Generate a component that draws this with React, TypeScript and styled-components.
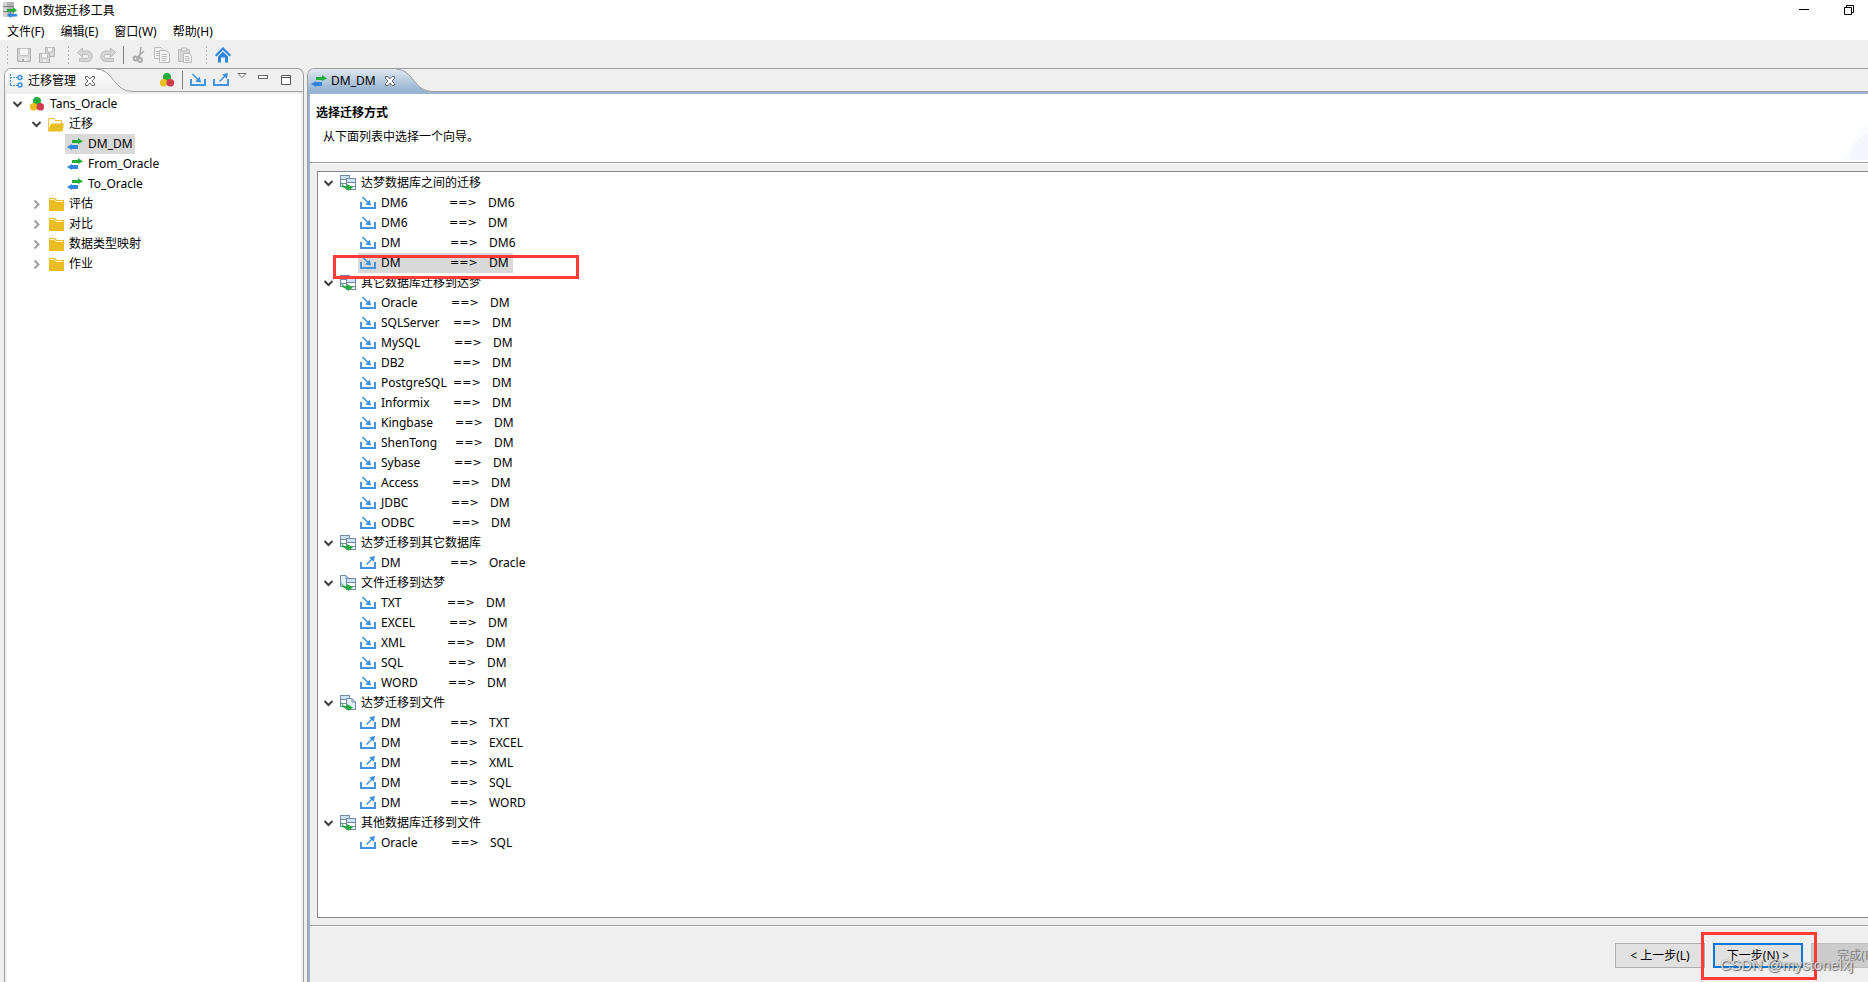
import React, { useState } from "react";
import styled, { createGlobalStyle, css } from "styled-components";

const GlobalStyle = createGlobalStyle`
  * { box-sizing: border-box; }
  html, body { margin: 0; padding: 0; }
  body {
    background: #efefef;
    color: #000;
    font-family: "Noto Sans", "Noto Sans CJK SC", sans-serif;
    font-size: 12px;
    line-height: 20px;
    overflow: hidden;
  }
  button { font: inherit; color: inherit; }
  ul { list-style: none; margin: 0; padding: 0; }
  svg { display: block; flex: none; }
`;

const line = "#a0a0a0";
const face = "#efefef";
const activeBlue = "#99b4d1";

/* ---------- frame ---------- */

const Window = styled.div`
  display: flex;
  flex-direction: column;
  height: 100vh;
  background: ${face};
`;

const TitleBar = styled.header`
  display: flex;
  align-items: center;
  height: 20px;
  padding: 0 14px 0 3px;
  background: #fff;
`;

const WindowTitle = styled.h1`
  flex: 1;
  margin: 0 0 0 5px;
  font-size: 12px;
  font-weight: 400;
  line-height: 20px;
  padding-top: 2px;
`;

const WindowButton = styled.button`
  display: flex;
  align-items: center;
  justify-content: center;
  width: 10px;
  height: 16px;
  margin-left: 35px;
  padding: 0;
  border: 0;
  background: none;
`;

const MenuBar = styled.nav`
  display: flex;
  gap: 16px;
  height: 20px;
  padding: 0 7px;
  background: #fff;
`;

const MenuButton = styled.button`
  height: 20px;
  padding: 2px 0 0;
  border: 0;
  background: none;
  line-height: 20px;
  white-space: nowrap;
`;

const ToolBar = styled.div`
  display: flex;
  align-items: center;
  height: 28px;
  padding: 2px 6px 0;
`;

const ToolGroup = styled.div`
  display: flex;
  align-items: center;
  gap: 7px;
  margin-right: 12px;
  padding-left: 10px;
  background: radial-gradient(circle, #b8b8b8 1px, transparent 1px) 0 0 / 3px 4px repeat-y;
`;

const IconButton = styled.button<{ $narrow?: boolean }>`
  display: flex;
  align-items: center;
  justify-content: center;
  width: ${(p) => (p.$narrow ? 12 : 16)}px;
  height: 20px;
  padding: 0;
  border: 0;
  background: none;
`;

const Divider = styled.span`
  width: 1px;
  height: 18px;
  background: #808080;
`;

const Workbench = styled.div`
  display: flex;
  flex: 1;
  gap: 3px;
  min-height: 0;
  padding-left: 4px;
`;

/* ---------- panels ---------- */

const Side = styled.aside`
  display: flex;
  flex-direction: column;
  flex: none;
  width: 300px;
  border: 1px solid ${line};
  border-bottom: 0;
  border-radius: 7px 7px 0 0;
`;

const Editor = styled.main`
  display: flex;
  flex-direction: column;
  flex: 1;
  min-width: 0;
  border: 1px solid ${line};
  border-width: 1px 0 0 1px;
  border-radius: 7px 0 0 0;
  overflow: hidden;
`;

const PanelHeader = styled.div`
  display: flex;
  flex: none;
  height: 23px;
`;

const Tab = styled.div<{ $active?: boolean }>`
  display: flex;
  align-items: center;
  height: 23px;
  padding-left: ${(p) => (p.$active ? 3 : 4)}px;
  border-radius: 6px 0 0 0;
  background: ${(p) =>
    p.$active ? `linear-gradient(#dfe8f1, ${activeBlue} 90%)` : `linear-gradient(#ffffff, ${face})`};
`;

const TabLabel = styled.span`
  margin: 0 8px 0 4px;
  white-space: nowrap;
`;

const TabFill = styled.div`
  display: flex;
  flex: 1;
  align-items: flex-start;
  justify-content: flex-end;
  border-bottom: 1px solid ${line};
`;

const PanelTools = styled.div`
  display: flex;
  align-items: center;
  gap: 7px;
  height: 22px;
  padding-right: 9px;
`;

const SideBody = styled.div`
  flex: 1;
  margin: 2px 2px 0;
  background: #fff;
`;

const EditorBody = styled.div`
  display: flex;
  flex: 1;
  flex-direction: column;
  min-height: 0;
  border-top: 2px solid ${activeBlue};
  border-left: 2px solid ${activeBlue};
`;

const WizardHeader = styled.section`
  display: flex;
  justify-content: space-between;
  align-items: flex-end;
  height: 69px;
  padding: 0 0 2px 6px;
  border-bottom: 1px solid ${line};
  background: #fff;
`;

const WizardText = styled.div`
  align-self: flex-start;
  padding-top: 9px;
`;

const WizardTitle = styled.h2`
  margin: 0;
  font-size: 12px;
  font-weight: 700;
`;

const WizardHint = styled.p`
  margin: 4px 0 0 7px;
`;

const ListArea = styled.div`
  display: flex;
  flex: 1;
  min-height: 0;
  padding: 7px 0 7px 7px;
  border-top: 1px solid #fff;
`;

const ListBox = styled.div`
  flex: 1;
  padding: 1px 0 0 5px;
  border: 1px solid #828790;
  border-right: 0;
  background: #fff;
`;

const Footer = styled.footer`
  display: flex;
  flex: none;
  justify-content: flex-end;
  align-items: flex-start;
  gap: 8px;
  height: 57px;
  margin-right: -33px;
  padding-top: 17px;
  border-top: 1px solid ${line};
  box-shadow: inset 0 1px #fff;
`;

const WizardButton = styled.button<{ $primary?: boolean }>`
  width: 90px;
  height: 25px;
  padding: 0;
  border: ${(p) => (p.$primary ? "2px solid #0078d7" : "1px solid #adadad")};
  background: #e1e1e1;
  line-height: 20px;
  white-space: nowrap;
  &:disabled {
    border-color: #bfbfbf;
    background: #cccccc;
    color: #838383;
  }
`;

/* ---------- tree ---------- */

const Row = styled.div`
  display: flex;
  align-items: center;
  height: 20px;
`;

const Toggle = styled.button`
  display: flex;
  align-items: center;
  justify-content: center;
  width: 11px;
  height: 20px;
  padding: 0;
  border: 0;
  background: none;
`;

const NodeLabel = styled.span`
  margin-left: 5px;
  white-space: nowrap;
`;

const SideTree = styled.ul`
  padding-left: 5px;
`;

const SideBranch = styled.ul`
  padding-left: 19px;
`;

const NodeIcon = styled.span`
  display: flex;
  justify-content: center;
  width: 16px;
  margin-left: 6px;
`;

const selected = css`background: #d9d9d9;`;

const Leaf = styled.div<{ $selected?: boolean }>`
  position: relative;
  display: flex;
  align-items: center;
  width: max-content;
  height: 20px;
  padding: 0 2px;
  ${(p) => p.$selected && selected}
`;

const SideLeaves = styled.ul`
  padding-left: 34px;
`;

const RouteList = styled.ul`
  padding-left: 35px;
`;

const RouteSource = styled.span<{ $width: number }>`
  width: ${(p) => p.$width}px;
  margin-left: 5px;
  white-space: nowrap;
`;

const RouteArrow = styled.span`
  width: 39px;
  font-family: "DejaVu Sans", sans-serif;
  font-size: 11px;
`;

const RouteTarget = styled.span`
  padding-right: 2px;
  white-space: nowrap;
`;

const RowMark = styled.span`
  position: absolute;
  z-index: 1;
  top: 2px;
  left: -25px;
  width: 246px;
  height: 24px;
  border: 3px solid #ff3b38;
  pointer-events: none;
`;

const ButtonHolder = styled.div`
  position: relative;
`;

const ButtonMark = styled.span`
  position: absolute;
  z-index: 1;
  top: -11px;
  left: -12px;
  width: 116px;
  height: 48px;
  border: 3px solid #ff3b38;
  pointer-events: none;
`;

const Watermark = styled.div`
  position: absolute;
  z-index: 2;
  right: 15px;
  bottom: 7px;
  color: rgba(255, 255, 255, 0.75);
  font-family: "Liberation Sans", sans-serif;
  font-size: 15px;
  text-shadow: 1px 1px 1px rgba(60, 60, 60, 0.75), 0 0 1px rgba(90, 90, 90, 0.7);
  pointer-events: none;
`;

/* ---------- icons ---------- */

const AppIcon = () => (
  <svg width="15" height="16" viewBox="0 0 15 16">
    <rect x="0" y="0" width="11" height="15" fill="#b4b4b4" />
    <rect x="0" y="0" width="4" height="15" fill="#d2d2d2" />
    <path d="M0 4.500H11M0 9.500H11" stroke="#7d7d7d" />
    <path d="M4 7H10V5L14 8.500L10 11V9.500H4Z" fill="#22ac38" />
    <path d="M14 12H8V10L4 13L8 16V14.500H14Z" fill="#2f86dc" />
  </svg>
);

const TransferIcon = () => (
  <svg width="16" height="16" viewBox="0 0 16 16">
    <path d="M5 4H11V2L16 5.500L11 8V7H5Z" fill="#22ac38" />
    <path d="M11 9H5V8L0 11L5 14V13H11Z" fill="#2f86dc" />
  </svg>
);

const BallsIcon = () => (
  <svg width="14" height="14" viewBox="0 0 14 14">
    <circle cx="7" cy="4" r="4" fill="#22ac38" />
    <circle cx="3.700" cy="9.800" r="3.800" fill="#e8be22" />
    <circle cx="10.300" cy="9.800" r="3.800" fill="#d13a4c" />
  </svg>
);

const MigrateIcon = () => (
  <svg width="15" height="15" viewBox="0 0 15 15" fill="none" stroke="#3c8fde">
    <path d="M1.500 1V13M1 4.500H8M1 12.500H8" strokeDasharray="2 1" />
    <circle cx="11" cy="4.500" r="2" strokeWidth="1.500" />
    <circle cx="11" cy="12" r="2" strokeWidth="1.500" />
  </svg>
);

const CloseIcon = () => (
  <svg width="12" height="12" viewBox="0 0 12 12">
    <path
      d="M1.500 1.500H4L6 4L8 1.500H10.500V3.500L8 6L10.500 8.500V10.500H8L6 8L4 10.500H1.500V8.500L4 6L1.500 3.500Z"
      fill="#fff"
      stroke="#6b6b6b"
    />
  </svg>
);

const ImportIcon = () => (
  <svg width="16" height="14" viewBox="0 0 16 14">
    <path d="M1 6V12H15V6" fill="none" stroke="#4494e0" strokeWidth="2" />
    <path d="M2.500 1L8 6.500" stroke="#3c8fde" strokeWidth="1.500" />
    <path d="M11 9.500L9.800 3.800L5.200 8.400Z" fill="#3c8fde" />
  </svg>
);

const ExportIcon = () => (
  <svg width="16" height="14" viewBox="0 0 16 14">
    <path d="M1 6V12H15V6" fill="none" stroke="#4494e0" strokeWidth="2" />
    <path d="M6.500 8.500L12 3" stroke="#3c8fde" strokeWidth="1.500" />
    <path d="M15 0L13.800 5.700L9.200 1.200Z" fill="#3c8fde" />
  </svg>
);

const FolderIcon = ({ open }: { open?: boolean }) => (
  <svg width="16" height="15" viewBox="0 0 16 15">
    {open ? (
      <>
        <path d="M.7 14V1.500H6L7 3.500H13.500V7" fill="#fff" stroke="#e8be22" />
        <path d="M0 14.500L3 6.500H16L14.500 14.500Z" fill="#e8be22" />
      </>
    ) : (
      <>
        <path d="M1 1H7L9 3H16V14H1Z" fill="#e8be22" />
        <path d="M2 2.500H6.500L8 4.500H15" fill="none" stroke="#fff5cf" />
      </>
    )}
  </svg>
);

const Chevron = ({ open }: { open: boolean }) => (
  <svg width="11" height="11" viewBox="0 0 11 11" fill="none" strokeWidth="2">
    {open ? <path d="M1.500 3L5.500 7L9.500 3" stroke="#404040" /> : <path d="M3.500 1.500L7.500 5.500L3.500 9.500" stroke="#a0a0a0" />}
  </svg>
);

type Kind = "table" | "page";

const Sheet = ({ kind, x, y }: { kind: Kind; x: number; y: number }) =>
  kind === "table" ? (
    <g transform={`translate(${x} ${y})`}>
      <rect x=".5" y=".5" width="9" height="11" fill="#fff" stroke="#7188a8" />
      <path d="M1 1H9V4H1Z" fill="#cfe2fa" />
      <path d="M1 4.500H9M1 8.500H9" stroke="#7188a8" />
    </g>
  ) : (
    <g transform={`translate(${x} ${y})`}>
      <path d="M.5.5H6L9.500 4V11.500H.5Z" fill="#e3eefb" stroke="#7188a8" />
      <path d="M6 .5V4H9.500" fill="none" stroke="#7188a8" />
    </g>
  );

const GroupIcon = ({ from, to }: { from: Kind; to: Kind }) => (
  <svg width="16" height="16" viewBox="0 0 16 16">
    <Sheet kind={from} x={0} y={0} />
    <Sheet kind={to} x={6} y={3} />
    <path d="M1.500 6.500C2 10 4 11.500 7 11.500V9L13 12.500L8 16V14C4 14 1 11.500 1.500 6.500Z" fill="#22ac38" />
  </svg>
);

const SaveIcon = () => (
  <svg width="16" height="16" viewBox="0 0 16 16">
    <path d="M1.500 1.500H14.500V14.500H1.500Z" fill="#dadada" stroke="#b0b0b0" />
    <path d="M3.500 1.500H12.500V8.500H3.500Z" fill="#f6f6f6" stroke="#c0c0c0" />
    <path d="M5 11H11V14H5Z" fill="#f3f3f3" />
    <path d="M6 12H8V14H6Z" fill="#a5a5a5" />
  </svg>
);

const SaveAllIcon = () => (
  <svg width="16" height="16" viewBox="0 0 16 16">
    <path d="M6.500.5H15.500V9.500H6.500Z" fill="#dadada" stroke="#b0b0b0" />
    <path d="M8.500.5H13.500V5H8.500Z" fill="#f6f6f6" stroke="#c0c0c0" />
    <path d="M.5 6.500H10.500V15.500H.5Z" fill="#dadada" stroke="#b0b0b0" />
    <path d="M2.500 6.500H8.500V11H2.500Z" fill="#f6f6f6" stroke="#c0c0c0" />
    <path d="M4 13H7V15H4Z" fill="#f3f3f3" />
  </svg>
);

const TurnIcon = ({ flip }: { flip?: boolean }) => (
  <svg width="16" height="16" viewBox="0 0 16 16">
    <path
      transform={flip ? "translate(16 0) scale(-1 1)" : undefined}
      d="M.5 5.500L5.500 1V4H10C17 4 17 14.500 10 14.500H2.500V11.500H10C12.500 11.500 12.500 7.500 10 7.500H5.500V10Z"
      fill="#d6d6d6"
      stroke="#bababa"
    />
  </svg>
);

const CutIcon = () => (
  <svg width="16" height="16" viewBox="0 0 16 16" fill="none" stroke="#a8a8a8">
    <path d="M10 0L8.500 10M13 4L6 10.500" strokeWidth="1.500" />
    <circle cx="4.500" cy="11.500" r="2" strokeWidth="1.800" />
    <circle cx="9" cy="13" r="2" strokeWidth="1.800" />
  </svg>
);

const CopyIcon = () => (
  <svg width="16" height="16" viewBox="0 0 16 16" fill="#f5f5f5" stroke="#bababa">
    <path d="M.5.5H7L9.500 3V11.500H.5Z" />
    <path d="M2 4.500H5M2 6.500H5M2 8.500H5" />
    <path d="M5.500 3.500H12L15.500 6.500V15.500H5.500Z" />
    <path d="M7.500 7.500H13M7.500 9.500H13M7.500 11.500H13M7.500 13.500H12" />
  </svg>
);

const PasteIcon = () => (
  <svg width="16" height="16" viewBox="0 0 16 16" stroke="#bababa">
    <path d="M1.500 2.500H12.500V14.500H1.500Z" fill="#d9d9d9" />
    <path d="M4.500 1H9.500V4H4.500Z" fill="#efefef" />
    <path d="M6.500 6.500H12L14.500 9V15.500H6.500Z" fill="#f7f7f7" />
    <path d="M8 9.500H12M8 11.500H13M8 13.500H13" />
  </svg>
);

const HomeIcon = () => (
  <svg width="16" height="16" viewBox="0 0 16 16">
    <path d="M8 0L16 8L14.500 9.500L8 3L1.500 9.500L0 8Z" fill="#2f86dc" />
    <path d="M8 4.500L13 9.500V15.500H10V10.500H6V15.500H3V9.500Z" fill="#2f86dc" />
  </svg>
);

const MenuTriangleIcon = () => (
  <svg width="10" height="16" viewBox="0 0 10 16">
    <path d="M1 1.500H9L5 5.500Z" fill="#fff" stroke="#6b6b6b" />
  </svg>
);

const MinimizePanelIcon = () => (
  <svg width="10" height="16" viewBox="0 0 10 16">
    <rect x=".5" y="3.500" width="9" height="3" fill="#fff" stroke="#6b6b6b" />
  </svg>
);

const MaximizePanelIcon = () => (
  <svg width="10" height="16" viewBox="0 0 10 16">
    <path d="M.5 3.500H9.500V12.500H.5ZM0 5.500H10" fill="#fff" stroke="#5a5a5a" />
  </svg>
);

const TabCurve = ({ active }: { active?: boolean }) => (
  <svg width="36" height="23" viewBox="0 0 36 23">
    <defs>
      <linearGradient id={active ? "tabActive" : "tabPlain"} x1="0" y1="0" x2="0" y2="1">
        <stop offset="0" stopColor={active ? "#dfe8f1" : "#ffffff"} />
        <stop offset=".9" stopColor={active ? activeBlue : face} />
      </linearGradient>
    </defs>
    <path d="M0 0C17 0 18 22.500 36 22.500V23H0Z" fill={`url(#${active ? "tabActive" : "tabPlain"})`} />
    <path d="M0 0C17 0 18 22.500 36 22.500" fill="none" stroke={line} />
  </svg>
);

const WizardArt = () => (
  <svg width="28" height="40" viewBox="0 0 28 40">
    <path d="M0 40L28 0V40Z" fill="#fafcff" />
    <path d="M9 40C11 26 18 18 28 13V40Z" fill="#f4f7fd" />
  </svg>
);

/* ---------- data ---------- */

type Route = [source: string, width: number, target: string];
type Group = { title: string; from: Kind; to: Kind; out?: boolean; routes: Route[] };

const groups: Group[] = [
  {
    title: "达梦数据库之间的迁移", from: "table", to: "table",
    routes: [["DM6", 68, "DM6"], ["DM6", 68, "DM"], ["DM", 69, "DM6"], ["DM", 69, "DM"]],
  },
  {
    title: "其它数据库迁移到达梦", from: "table", to: "table",
    routes: [
      ["Oracle", 70, "DM"], ["SQLServer", 72, "DM"], ["MySQL", 73, "DM"], ["DB2", 72, "DM"],
      ["PostgreSQL", 72, "DM"], ["Informix", 72, "DM"], ["Kingbase", 74, "DM"], ["ShenTong", 74, "DM"],
      ["Sybase", 73, "DM"], ["Access", 71, "DM"], ["JDBC", 70, "DM"], ["ODBC", 71, "DM"],
    ],
  },
  { title: "达梦迁移到其它数据库", from: "table", to: "table", out: true, routes: [["DM", 69, "Oracle"]] },
  {
    title: "文件迁移到达梦", from: "page", to: "table",
    routes: [["TXT", 66, "DM"], ["EXCEL", 68, "DM"], ["XML", 66, "DM"], ["SQL", 67, "DM"], ["WORD", 67, "DM"]],
  },
  {
    title: "达梦迁移到文件", from: "table", to: "page", out: true,
    routes: [["DM", 69, "TXT"], ["DM", 69, "EXCEL"], ["DM", 69, "XML"], ["DM", 69, "SQL"], ["DM", 69, "WORD"]],
  },
  { title: "其他数据库迁移到文件", from: "table", to: "table", out: true, routes: [["Oracle", 70, "SQL"]] },
];

const migrations = ["DM_DM", "From_Oracle", "To_Oracle"];
const closedFolders = ["评估", "对比", "数据类型映射", "作业"];
const menus = ["文件(F)", "编辑(E)", "窗口(W)", "帮助(H)"];

/* ---------- views ---------- */

const RouteGroup = ({ group, marked }: { group: Group; marked: number }) => {
  const [open, setOpen] = useState(true);
  return (
    <li role="treeitem" aria-expanded={open}>
      <Row>
        <Toggle aria-label={group.title} onClick={() => setOpen(!open)}>
          <Chevron open={open} />
        </Toggle>
        <NodeIcon><GroupIcon from={group.from} to={group.to} /></NodeIcon>
        <NodeLabel>{group.title}</NodeLabel>
      </Row>
      {open && (
        <RouteList role="group">
          {group.routes.map(([source, width, target], i) => (
            <li role="treeitem" aria-selected={i === marked} key={source + target}>
              <Leaf $selected={i === marked}>
                {group.out ? <ExportIcon /> : <ImportIcon />}
                <RouteSource $width={width}>{source}</RouteSource>
                <RouteArrow>{"==>"}</RouteArrow>
                <RouteTarget>{target}</RouteTarget>
                {i === marked && <RowMark />}
              </Leaf>
            </li>
          ))}
        </RouteList>
      )}
    </li>
  );
};

const Explorer = () => (
  <Side>
    <PanelHeader>
      <Tab>
        <MigrateIcon />
        <TabLabel>迁移管理</TabLabel>
        <CloseIcon />
      </Tab>
      <TabCurve />
      <TabFill>
        <PanelTools>
          <IconButton aria-label="数据源"><BallsIcon /></IconButton>
          <Divider />
          <IconButton aria-label="导入"><ImportIcon /></IconButton>
          <IconButton aria-label="导出"><ExportIcon /></IconButton>
          <IconButton $narrow aria-label="菜单"><MenuTriangleIcon /></IconButton>
          <IconButton aria-label="最小化"><MinimizePanelIcon /></IconButton>
          <IconButton aria-label="最大化"><MaximizePanelIcon /></IconButton>
        </PanelTools>
      </TabFill>
    </PanelHeader>
    <SideBody>
      <SideTree role="tree">
        <li role="treeitem" aria-expanded>
          <Row>
            <Toggle aria-label="Tans_Oracle"><Chevron open /></Toggle>
            <NodeIcon><BallsIcon /></NodeIcon>
            <NodeLabel>Tans_Oracle</NodeLabel>
          </Row>
          <SideBranch role="group">
            <li role="treeitem" aria-expanded>
              <Row>
                <Toggle aria-label="迁移"><Chevron open /></Toggle>
                <NodeIcon><FolderIcon open /></NodeIcon>
                <NodeLabel>迁移</NodeLabel>
              </Row>
              <SideLeaves role="group">
                {migrations.map((name, i) => (
                  <li role="treeitem" aria-selected={i === 0} key={name}>
                    <Leaf $selected={i === 0}>
                      <TransferIcon />
                      <NodeLabel>{name}</NodeLabel>
                    </Leaf>
                  </li>
                ))}
              </SideLeaves>
            </li>
            {closedFolders.map((name) => (
              <li role="treeitem" aria-expanded={false} key={name}>
                <Row>
                  <Toggle aria-label={name}><Chevron open={false} /></Toggle>
                  <NodeIcon><FolderIcon /></NodeIcon>
                  <NodeLabel>{name}</NodeLabel>
                </Row>
              </li>
            ))}
          </SideBranch>
        </li>
      </SideTree>
    </SideBody>
  </Side>
);

const Wizard = () => (
  <Editor>
    <PanelHeader>
      <Tab $active>
        <TransferIcon />
        <TabLabel>DM_DM</TabLabel>
        <CloseIcon />
      </Tab>
      <TabCurve active />
      <TabFill />
    </PanelHeader>
    <EditorBody>
      <WizardHeader>
        <WizardText>
          <WizardTitle>选择迁移方式</WizardTitle>
          <WizardHint>从下面列表中选择一个向导。</WizardHint>
        </WizardText>
        <WizardArt />
      </WizardHeader>
      <ListArea>
        <ListBox>
          <ul role="tree">
            {groups.map((group, i) => (
              <RouteGroup key={group.title} group={group} marked={i === 0 ? 3 : -1} />
            ))}
          </ul>
        </ListBox>
      </ListArea>
      <Footer>
        <WizardButton>&lt; 上一步(L)</WizardButton>
        <ButtonHolder>
          <WizardButton $primary>下一步(N) &gt;</WizardButton>
          <ButtonMark />
        </ButtonHolder>
        <WizardButton disabled>完成(F)</WizardButton>
      </Footer>
    </EditorBody>
  </Editor>
);

export default function App() {
  return (
    <Window>
      <GlobalStyle />
      <TitleBar>
        <AppIcon />
        <WindowTitle>DM数据迁移工具</WindowTitle>
        <WindowButton aria-label="最小化窗口">
          <svg width="10" height="10" viewBox="0 0 10 10"><path d="M0 4.500H10" stroke="#000" /></svg>
        </WindowButton>
        <WindowButton aria-label="还原窗口">
          <svg width="10" height="10" viewBox="0 0 10 10" fill="none" stroke="#000">
            <path d="M.5 2.500H7.500V9.500H.5ZM2.500 2.500V.5H9.500V7.500H7.500" />
          </svg>
        </WindowButton>
      </TitleBar>
      <MenuBar>
        {menus.map((m) => <MenuButton key={m}>{m}</MenuButton>)}
      </MenuBar>
      <ToolBar>
        <ToolGroup>
          <IconButton aria-label="保存"><SaveIcon /></IconButton>
          <IconButton aria-label="全部保存"><SaveAllIcon /></IconButton>
        </ToolGroup>
        <ToolGroup>
          <IconButton aria-label="撤销"><TurnIcon /></IconButton>
          <IconButton aria-label="重做"><TurnIcon flip /></IconButton>
          <Divider />
          <IconButton aria-label="剪切"><CutIcon /></IconButton>
          <IconButton aria-label="复制"><CopyIcon /></IconButton>
          <IconButton aria-label="粘贴"><PasteIcon /></IconButton>
        </ToolGroup>
        <ToolGroup>
          <IconButton aria-label="主页"><HomeIcon /></IconButton>
        </ToolGroup>
      </ToolBar>
      <Workbench>
        <Explorer />
        <Wizard />
      </Workbench>
      <Watermark>CSDN @mystonelxj</Watermark>
    </Window>
  );
}
